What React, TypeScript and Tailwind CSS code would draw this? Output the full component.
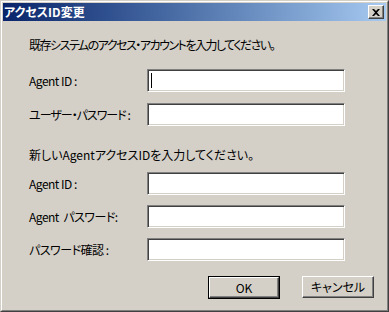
import React from 'react';

const font = "font-['MS_UI_Gothic','Noto_Sans_CJK_JP',sans-serif]";

const Field: React.FC<{ label: string; caret?: boolean; tight?: boolean }> = ({ label, caret, tight }) => (
  <div className="flex items-center h-[23px]">
    <span className={`w-[118px] shrink-0 text-[12px] leading-[16px] text-black [font-feature-settings:'palt'] whitespace-pre ${tight ? 'tracking-[-1px]' : 'tracking-[-0.5px]'}`}>{label}</span>
    <div className="relative w-[198px] h-[23px] bg-white border border-t-[#808080] border-l-[#808080] border-r-white border-b-white shadow-[inset_1px_1px_0_#404040,inset_-1px_-1px_0_#d4d0c8]">
      {caret && <div className="absolute left-[3px] top-[3px] w-px h-[15px] bg-black" />}
    </div>
  </div>
);

const App: React.FC = () => {
  return (
    <div className={`w-[389px] h-[312px] bg-[#d4d0c8] border border-t-[#d4d0c8] border-l-[#d4d0c8] border-r-[#404040] border-b-[#404040] ${font}`}>
      <div className="w-full h-full border border-t-white border-l-white border-r-[#808080] border-b-[#808080] p-px flex flex-col">
        {/* Title bar */}
        <div className="h-[18px] shrink-0 flex items-center justify-between bg-gradient-to-r from-[#0a246a] to-[#a6caf0] pl-[1px] pr-[2px]">
          <span className="text-white font-bold text-[12px] leading-[16px] [font-feature-settings:'palt']">アクセスID変更</span>
          <div className="w-[16px] h-[14px] bg-[#d4d0c8] border border-t-white border-l-white border-r-[#404040] border-b-[#404040] shadow-[inset_-1px_-1px_0_#808080] flex items-center justify-center">
            <svg width="8" height="7" viewBox="0 0 8 7">
              <path d="M0 0h2l2 2 2-2h2L5 3.5 8 7H6L4 5 2 7H0l3-3.5z" fill="#000" />
            </svg>
          </div>
        </div>

        {/* Body */}
        <div className="flex flex-col pl-[26px] pt-[16px] text-black">
          <p className="text-[12px] leading-[16px] tracking-[-1.5px] [font-feature-settings:'palt']">既存システムのアクセス・アカウントを入力してください。</p>
          <div className="flex flex-col gap-[11px] mt-[16px]">
            <Field label="Agent ID :" caret />
            <Field label="ユーザー・パスワード :" tight />
          </div>
          <p className="text-[12px] leading-[16px] mt-[21px] [font-feature-settings:'palt']">新しいAgentアクセスIDを入力してください。</p>
          <div className="flex flex-col gap-[10px] mt-[9px]">
            <Field label="Agent ID :" />
            <Field label="Agent  パスワード:" />
            <Field label="パスワード確認 :" />
          </div>
          <div className="flex justify-end gap-[22px] mt-[15px] pr-[12px]">
            <button className="w-[72px] h-[23px] border border-black bg-[#d4d0c8] p-0">
              <div className="w-full h-full border border-t-white border-l-white border-r-[#404040] border-b-[#404040] shadow-[inset_-1px_-1px_0_#808080] flex items-center justify-center text-[12px] leading-[16px]">
                OK
              </div>
            </button>
            <button className="w-[72px] h-[22px] bg-[#d4d0c8] border border-t-white border-l-white border-r-[#404040] border-b-[#404040] shadow-[inset_-1px_-1px_0_#808080] flex items-center justify-center text-[12px] leading-[16px] [font-feature-settings:'palt']">
              キャンセル
            </button>
          </div>
        </div>
      </div>
    </div>
  );
};

export default App;
